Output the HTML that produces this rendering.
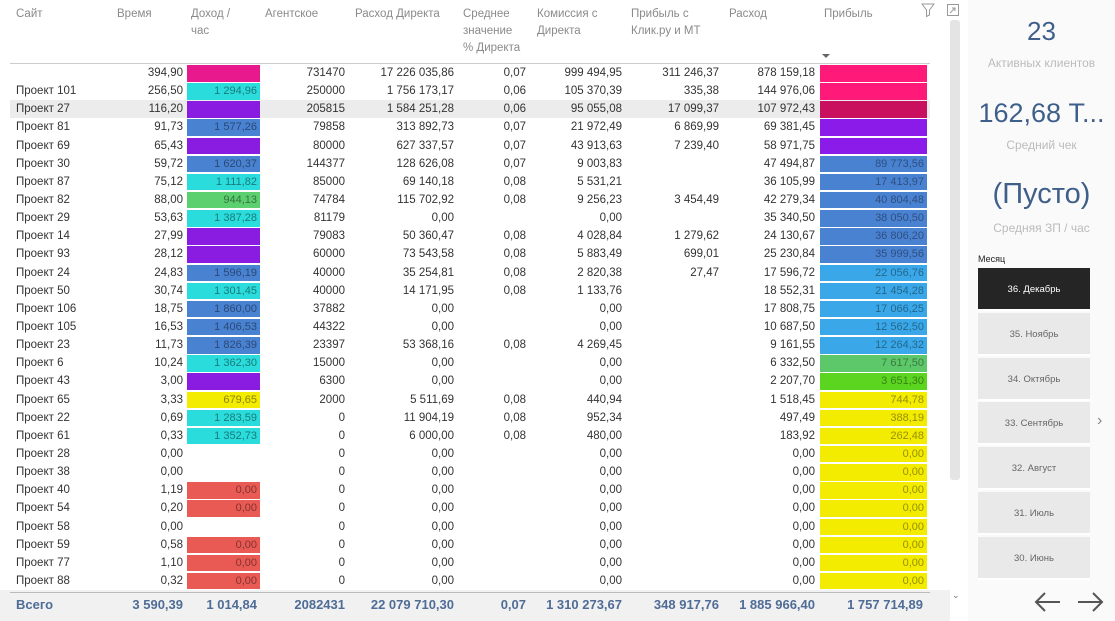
<!DOCTYPE html>
<html><head><meta charset="utf-8"><style>
*{margin:0;padding:0;box-sizing:border-box}
body{width:1115px;height:621px;overflow:hidden;background:#fff;font-family:"Liberation Sans",sans-serif;position:relative;color:#333}
.h{position:absolute;top:6px;font-size:11.5px;color:#8a8a8a;line-height:17px}
.r{position:absolute;left:10px;width:920px;height:18.14px;font-size:11.5px;line-height:18px}
.c{position:absolute;top:0;text-align:right;white-space:nowrap}
.b{position:absolute;top:1px;height:16.5px;text-align:right;padding-right:3px;line-height:16.5px;font-size:11px}
.tot{position:absolute;top:597px;font-size:13px;font-weight:bold;color:#4f6c96;white-space:nowrap}
.tl{position:absolute;left:978px;width:112px;height:43px;background:#e9e9e9;text-align:center;line-height:43px;font-size:9.5px;color:#666;border-bottom:2px solid #fff}
</style></head><body>
<div class="h" style="left:16px">Сайт</div>
<div class="h" style="left:117px">Время</div>
<div class="h" style="left:191px">Доход /<br>час</div>
<div class="h" style="left:265px">Агентское</div>
<div class="h" style="left:355px">Расход Директа</div>
<div class="h" style="left:463px">Среднее<br>значение<br>% Директа</div>
<div class="h" style="left:537px">Комиссия с<br>Директа</div>
<div class="h" style="left:631px">Прибыль с<br>Клик.ру и МТ</div>
<div class="h" style="left:729px">Расход</div>
<div class="h" style="left:824px">Прибыль</div>
<div style="position:absolute;left:822px;top:54px;width:0;height:0;border-left:4px solid transparent;border-right:4px solid transparent;border-top:4px solid #666"></div>
<svg style="position:absolute;left:921px;top:3px" width="14" height="14" viewBox="0 0 14 14"><path d="M1 1h12L8.5 7v5l-3 1.5V7z" fill="none" stroke="#999" stroke-width="1"/></svg>
<svg style="position:absolute;left:946px;top:3px" width="14" height="14" viewBox="0 0 14 14"><rect x="1.5" y="1.5" width="11" height="11" fill="none" stroke="#999"/><path d="M4 10l5-5M6 5h3v3" fill="none" stroke="#999"/></svg>
<div style="position:absolute;left:10px;top:63px;width:920px;height:1px;background:#ccc"></div>
<div style="position:absolute;left:950px;top:20px;width:10px;height:460px;background:#e4e4e4;border-radius:3px"></div>
<div style="position:absolute;left:10px;top:100px;width:920px;height:18px;background:#ececec"></div>
<div id="rows"></div>
<div style="position:absolute;left:0;top:590px;width:950px;height:31px;background:#f1f1f1"></div>
<div style="position:absolute;left:10px;top:592px;width:920px;height:1px;background:#bbb"></div>
<div class="tot" style="left:16px">Всего</div>
<div class="tot" style="right:calc(1115px - 183px)">3 590,39</div>
<div class="tot" style="right:calc(1115px - 257px)">1 014,84</div>
<div class="tot" style="right:calc(1115px - 345px)">2082431</div>
<div class="tot" style="right:calc(1115px - 454px)">22 079 710,30</div>
<div class="tot" style="right:calc(1115px - 526px)">0,07</div>
<div class="tot" style="right:calc(1115px - 622px)">1 310 273,67</div>
<div class="tot" style="right:calc(1115px - 719px)">348 917,76</div>
<div class="tot" style="right:calc(1115px - 815px)">1 885 966,40</div>
<div class="tot" style="right:calc(1115px - 923px)">1 757 714,89</div>
<div style="position:absolute;left:952px;top:590px;font-size:9px;color:#777">⌄</div>

<div style="position:absolute;left:968px;top:0;width:147px;height:621px;background:#fafafa"></div>
<div style="position:absolute;left:968px;top:16px;width:147px;text-align:center;font-size:26px;color:#3e5f8a">23</div>
<div style="position:absolute;left:968px;top:56px;width:147px;text-align:center;font-size:12px;color:#bbb">Активных клиентов</div>
<div style="position:absolute;left:968px;top:98px;width:147px;text-align:center;font-size:27px;color:#3e5f8a">162,68 Т...</div>
<div style="position:absolute;left:968px;top:138px;width:147px;text-align:center;font-size:12px;color:#bbb">Средний чек</div>
<div style="position:absolute;left:968px;top:178px;width:147px;text-align:center;font-size:29px;color:#3e5f8a">(Пусто)</div>
<div style="position:absolute;left:968px;top:221px;width:147px;text-align:center;font-size:12px;color:#bbb">Средняя ЗП / час</div>
<div style="position:absolute;left:978px;top:254px;font-size:9px;color:#222">Месяц</div>
<div class="tl" style="top:268px;background:#252525;color:#fff">36. Декабрь</div>
<div class="tl" style="top:313px">35. Ноябрь</div>
<div class="tl" style="top:358px">34. Октябрь</div>
<div class="tl" style="top:402px">33. Сентябрь</div>
<div class="tl" style="top:447px">32. Август</div>
<div class="tl" style="top:492px">31. Июль</div>
<div class="tl" style="top:537px">30. Июнь</div>
<div style="position:absolute;left:1097px;top:412px;font-size:16px;color:#888">›</div>
<svg style="position:absolute;left:1033px;top:590px" width="80" height="24" viewBox="0 0 80 24"><path d="M27 12H3M12 3l-9 9 9 9M45 12h24M60 3l9 9-9 9" fill="none" stroke="#555" stroke-width="2"/></svg>

<script>
var R=[
["","394,90","#e8198c","","731470","17 226 035,86","0,07","999 494,95","311 246,37","878 159,18","#ff1a7a",""],
["Проект 101","256,50","#2bdcdc","1 294,96","250000","1 756 173,17","0,06","105 370,39","335,38","144 976,06","#ff1a7a",""],
["Проект 27","116,20","#8a1be0","","205815","1 584 251,28","0,06","95 055,08","17 099,37","107 972,43","#c8105e",""],
["Проект 81","91,73","#4a82d2","1 577,26","79858","313 892,73","0,07","21 972,49","6 869,99","69 381,45","#8a1be8",""],
["Проект 69","65,43","#8a1be0","","80000","627 337,57","0,07","43 913,63","7 239,40","58 971,75","#8a1be8",""],
["Проект 30","59,72","#4a82d2","1 620,37","144377","128 626,08","0,07","9 003,83","","47 494,87","#4a82d2","89 773,56"],
["Проект 87","75,12","#2bdcdc","1 111,82","85000","69 140,18","0,08","5 531,21","","36 105,99","#4a82d2","17 413,97"],
["Проект 82","88,00","#5ccf6f","944,13","74784","115 702,92","0,08","9 256,23","3 454,49","42 279,34","#4a82d2","40 804,48"],
["Проект 29","53,63","#2bdcdc","1 387,28","81179","0,00","","0,00","","35 340,50","#4a82d2","38 050,50"],
["Проект 14","27,99","#8a1be0","","79083","50 360,47","0,08","4 028,84","1 279,62","24 130,67","#4a82d2","36 806,20"],
["Проект 93","28,12","#8a1be0","","60000","73 543,58","0,08","5 883,49","699,01","25 230,84","#4a82d2","35 999,56"],
["Проект 24","24,83","#4a82d2","1 596,19","40000","35 254,81","0,08","2 820,38","27,47","17 596,72","#3aa8e8","22 056,76"],
["Проект 50","30,74","#2bdcdc","1 301,45","40000","14 171,95","0,08","1 133,76","","18 552,31","#3aa8e8","21 454,28"],
["Проект 106","18,75","#4a82d2","1 860,00","37882","0,00","","0,00","","17 808,75","#3aa8e8","17 066,25"],
["Проект 105","16,53","#4a82d2","1 406,53","44322","0,00","","0,00","","10 687,50","#3aa8e8","12 562,50"],
["Проект 23","11,73","#4a82d2","1 826,39","23397","53 368,16","0,08","4 269,45","","9 161,55","#3aa8e8","12 264,32"],
["Проект 6","10,24","#2bdcdc","1 362,30","15000","0,00","","0,00","","6 332,50","#5dc86a","7 617,50"],
["Проект 43","3,00","#8a1be0","","6300","0,00","","0,00","","2 207,70","#5bd520","3 651,30"],
["Проект 65","3,33","#f4ec00","679,65","2000","5 511,69","0,08","440,94","","1 518,45","#f4ec00","744,78"],
["Проект 22","0,69","#2bdcdc","1 283,59","0","11 904,19","0,08","952,34","","497,49","#f4ec00","388,19"],
["Проект 61","0,33","#2bdcdc","1 352,73","0","6 000,00","0,08","480,00","","183,92","#f4ec00","262,48"],
["Проект 28","0,00","","","0","0,00","","0,00","","0,00","#f4ec00","0,00"],
["Проект 38","0,00","","","0","0,00","","0,00","","0,00","#f4ec00","0,00"],
["Проект 40","1,19","#ea5a55","0,00","0","0,00","","0,00","","0,00","#f4ec00","0,00"],
["Проект 54","0,20","#ea5a55","0,00","0","0,00","","0,00","","0,00","#f4ec00","0,00"],
["Проект 58","0,00","","","0","0,00","","0,00","","0,00","#f4ec00","0,00"],
["Проект 59","0,58","#ea5a55","0,00","0","0,00","","0,00","","0,00","#f4ec00","0,00"],
["Проект 77","1,10","#ea5a55","0,00","0","0,00","","0,00","","0,00","#f4ec00","0,00"],
["Проект 88","0,32","#ea5a55","0,00","0","0,00","","0,00","","0,00","#f4ec00","0,00"]];
var h="";
R.forEach(function(r,i){
 var t=64+i*18.14;
 h+='<div class="r" style="top:'+t+'px">';
 h+='<div class="c" style="left:6px;text-align:left">'+r[0]+'</div>';
 h+='<div class="c" style="right:'+(920-173)+'px">'+r[1]+'</div>';
 if(r[2])h+='<div class="b" style="left:177px;width:73px;background:'+r[2]+';color:rgba(0,0,0,.45)">'+r[3]+'</div>';
 var ends=[335,444,516,612,709,805];
 for(var k=0;k<6;k++)h+='<div class="c" style="right:'+(920-ends[k])+'px">'+r[4+k]+'</div>';
 h+='<div class="b" style="left:810px;width:107px;background:'+r[10]+';color:rgba(0,0,0,.4)">'+r[11]+'</div>';
 h+='</div>';
});
document.getElementById("rows").innerHTML=h;
</script>
</body></html>
